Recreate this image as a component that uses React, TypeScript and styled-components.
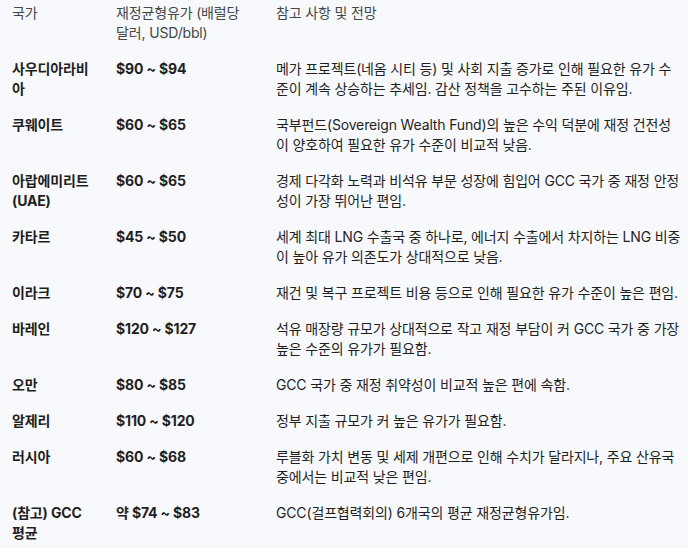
import React from "react";
import styled, { createGlobalStyle } from "styled-components";

const GlobalStyle = createGlobalStyle`
  html, body {
    margin: 0;
    padding: 0;
    background: #ffffff;
  }
  body {
    font-family: "Inter", "Noto Sans CJK KR", "Noto Sans", sans-serif;
    color: #1f1f1f;
    -webkit-font-smoothing: antialiased;
  }
`;

const Wrapper = styled.div`
  width: 688px;
  height: 548px;
  overflow: hidden;
  background: #f8f9fd;
`;

const Table = styled.table`
  width: 688px;
  border-collapse: collapse;
  table-layout: fixed;
  font-size: 14px;
  line-height: 20px;
  letter-spacing: -0.15px;
`;

const HeadCell = styled.th`
  text-align: left;
  vertical-align: top;
  font-weight: 400;
  color: #444746;
  padding: 3px 12px 8px;
  &:last-child {
    padding-right: 6px;
  }
`;

const Cell = styled.td<{ $strong?: boolean }>`
  vertical-align: top;
  padding: 8px 12px;
  font-weight: ${(p) => (p.$strong ? 700 : 400)};
  color: #1f1f1f;
  &:last-child {
    padding-right: 6px;
  }
`;

type Row = { country: string; price: string; note: string };

const rows: Row[] = [
  {
    country: "사우디아라비아",
    price: "$90 ~ $94",
    note: "메가 프로젝트(네옴 시티 등) 및 사회 지출 증가로 인해 필요한 유가 수준이 계속 상승하는 추세임. 감산 정책을 고수하는 주된 이유임.",
  },
  {
    country: "쿠웨이트",
    price: "$60 ~ $65",
    note: "국부펀드(Sovereign Wealth Fund)의 높은 수익 덕분에 재정 건전성이 양호하여 필요한 유가 수준이 비교적 낮음.",
  },
  {
    country: "아랍에미리트 (UAE)",
    price: "$60 ~ $65",
    note: "경제 다각화 노력과 비석유 부문 성장에 힘입어 GCC 국가 중 재정 안정성이 가장 뛰어난 편임.",
  },
  {
    country: "카타르",
    price: "$45 ~ $50",
    note: "세계 최대 LNG 수출국 중 하나로, 에너지 수출에서 차지하는 LNG 비중이 높아 유가 의존도가 상대적으로 낮음.",
  },
  {
    country: "이라크",
    price: "$70 ~ $75",
    note: "재건 및 복구 프로젝트 비용 등으로 인해 필요한 유가 수준이 높은 편임.",
  },
  {
    country: "바레인",
    price: "$120 ~ $127",
    note: "석유 매장량 규모가 상대적으로 작고 재정 부담이 커 GCC 국가 중 가장 높은 수준의 유가가 필요함.",
  },
  {
    country: "오만",
    price: "$80 ~ $85",
    note: "GCC 국가 중 재정 취약성이 비교적 높은 편에 속함.",
  },
  {
    country: "알제리",
    price: "$110 ~ $120",
    note: "정부 지출 규모가 커 높은 유가가 필요함.",
  },
  {
    country: "러시아",
    price: "$60 ~ $68",
    note: "루블화 가치 변동 및 세제 개편으로 인해 수치가 달라지나, 주요 산유국 중에서는 비교적 낮은 편임.",
  },
  {
    country: "(참고) GCC 평균",
    price: "약 $74 ~ $83",
    note: "GCC(걸프협력회의) 6개국의 평균 재정균형유가임.",
  },
];

export default function App() {
  return (
    <Wrapper>
      <GlobalStyle />
      <Table>
        <colgroup>
          <col style={{ width: 104 }} />
          <col style={{ width: 160 }} />
          <col />
        </colgroup>
        <thead>
          <tr>
            <HeadCell>국가</HeadCell>
            <HeadCell>재정균형유가 (배럴당 달러, USD/bbl)</HeadCell>
            <HeadCell>참고 사항 및 전망</HeadCell>
          </tr>
        </thead>
        <tbody>
          {rows.map((r) => (
            <tr key={r.country}>
              <Cell $strong>{r.country}</Cell>
              <Cell $strong>{r.price}</Cell>
              <Cell>{r.note}</Cell>
            </tr>
          ))}
        </tbody>
      </Table>
    </Wrapper>
  );
}
